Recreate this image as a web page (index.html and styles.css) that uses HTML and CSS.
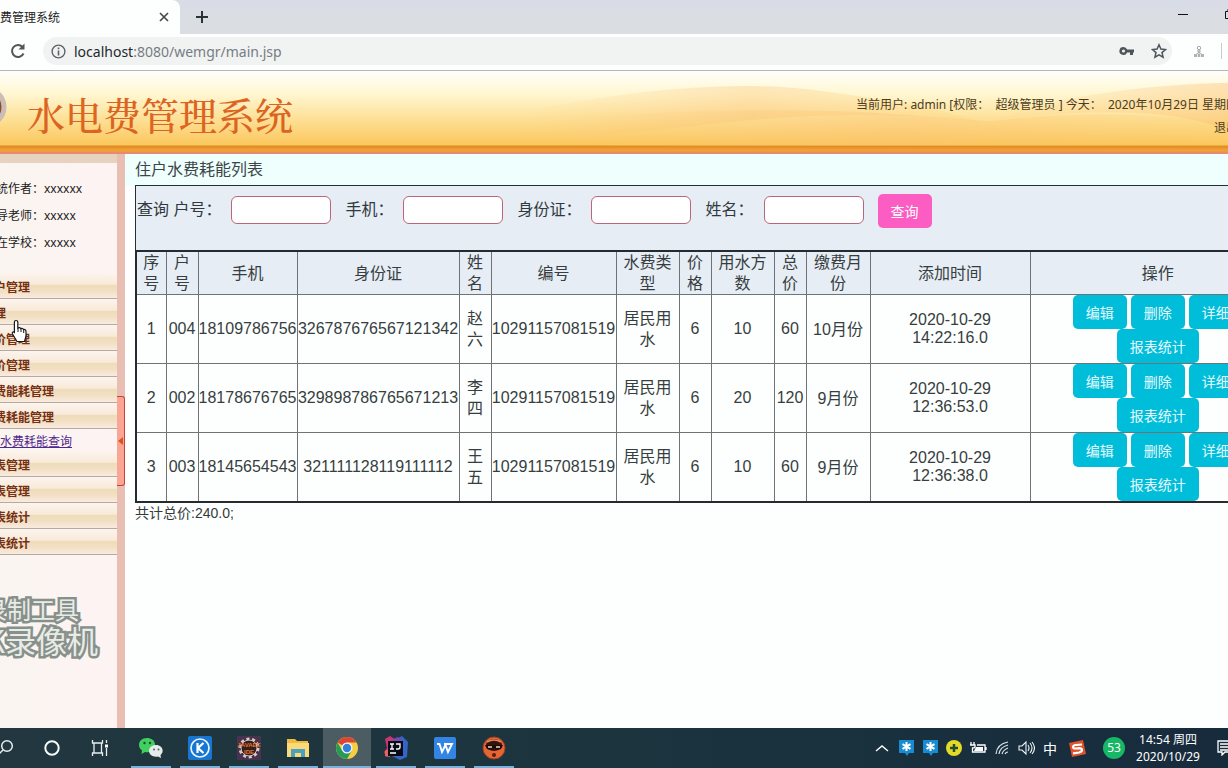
FILE: index.html
```html
<!DOCTYPE html>
<html lang="zh-CN">
<head>
<meta charset="utf-8">
<title>水电费管理系统</title>
<link rel="stylesheet" href="styles.css">
</head>
<body>
<div class="screen">
  <div class="tabs">
    <div class="tab"><span>费管理系统</span>
      <button class="plain tab-close" aria-label="关闭"><svg width="10" height="10" viewBox="0 0 10 10"><path d="M1 1l8 8M9 1l-8 8" stroke="#444b4e" stroke-width="1.7"/></svg></button>
    </div>
    <button class="plain new-tab" aria-label="新标签页"><svg width="14" height="14" viewBox="0 0 14 14"><path d="M7 1v12M1 7h12" stroke="#293236" stroke-width="2"/></svg></button>
    <div class="window-buttons">
      <svg width="12" height="12" viewBox="0 0 12 12"><path d="M1 6.500h10" stroke="#111" stroke-width="1"/></svg>
      <svg width="12" height="12" viewBox="0 0 12 12"><path d="M1.500 3.500h7v7h-7zM4 3V1h7v7H9" fill="none" stroke="#111"/></svg>
    </div>
  </div>
  <div class="address">
    <button class="plain reload" aria-label="刷新"><svg width="18" height="18" viewBox="0 0 18 18"><path d="M14.500 11.500A6 6 0 1 1 13.500 5" fill="none" stroke="#50575a" stroke-width="2"/><path d="M15.500 1.500v6h-6z" fill="#50575a"/></svg></button>
    <div class="url">
      <svg width="15" height="15" viewBox="0 0 15 15"><circle cx="7.500" cy="7.500" r="6.400" fill="none" stroke="#5c6366" stroke-width="1.400"/><path d="M7.500 6.500v5M7.500 3.500v1.700" stroke="#5c6366" stroke-width="1.600"/></svg>
      <span class="url-text"><b>localhost</b>:8080/wemgr/main.jsp</span>
      <svg class="key" width="16" height="12" viewBox="0 0 16 12"><path d="M4.500 2a4 4 0 1 0 3.600 5.500H11V10h3V7.500h1v-3H8.100A4 4 0 0 0 4.500 2z" fill="#4d5558"/><circle cx="4.500" cy="6" r="1.600" fill="#eef0f1"/></svg>
      <svg width="16" height="16" viewBox="0 0 16 16"><path d="M8 1.800l1.900 4.300 4.600.4-3.500 3.100 1.100 4.600L8 11.800l-4.100 2.400L5 9.600 1.500 6.500l4.600-.4z" fill="none" stroke="#4d5558" stroke-width="1.500"/></svg>
    </div>
    <svg class="ext" width="12" height="13" viewBox="0 0 12 13"><path d="M6 4v6M6 7L2.500 10M6 7l3.500 3M4 6h4" fill="none" stroke="#a5a9aa"/><circle cx="6" cy="3" r="1.700" fill="none" stroke="#a5a9aa"/><path d="M1 9h3v3H1zM4.700 9h2.600v3H4.700zM8 9h3v3H8z" fill="#b0b3b4"/></svg>
    <i class="divider"></i>
  </div>

  <header class="banner">
    <svg class="waves" viewBox="0 0 1228 76" preserveAspectRatio="none">
      <defs>
        <linearGradient id="hill" x1="0" y1="0" x2="1" y2="0"><stop offset="0" stop-color="#fbbd70" stop-opacity="0"/><stop offset=".5" stop-color="#fbbd70" stop-opacity=".32"/><stop offset="1" stop-color="#fbc45c" stop-opacity=".1"/></linearGradient>
        <linearGradient id="rise" x1="0" y1="0" x2="1" y2="0"><stop offset="0" stop-color="#fbbd70" stop-opacity="0"/><stop offset="1" stop-color="#fbbd70" stop-opacity=".4"/></linearGradient>
      </defs>
      <path d="M520 42Q700 4 820 20T980 52Q860 36 700 55T520 60z" fill="url(#hill)"/>
      <path d="M980 52Q1090 15 1228 12V60Q1150 28 980 52z" fill="url(#rise)"/>
      <path d="M560 48Q760 34 900 44T980 52Q1100 36 1228 52V76H560z" fill="url(#hill)"/>
    </svg>
    <svg class="emblem" width="8" height="40" viewBox="0 0 8 40"><circle cx="-14" cy="20" r="18" fill="#8c4c2d" stroke="#cbbcb5" stroke-width="5"/></svg>
    <h1>水电费管理系统</h1>
    <div class="user">
      <p>当前用户: admin [权限：&nbsp; 超级管理员 ] 今天：&nbsp; 2020年10月29日 星期四</p>
      <a href="#">退出</a>
    </div>
  </header>

  <div class="body">
    <aside class="side">
      <div class="about"><p>统作者：xxxxxx</p><p>导老师：xxxxx</p><p>在学校：xxxxx</p></div>
      <nav class="menu">
        <a href="#">户管理</a><a href="#">理</a><a href="#">价管理</a><a href="#">价管理</a><a href="#">费能耗管理</a><a href="#">费耗能管理</a>
        <a class="sub" href="#">水费耗能查询</a>
        <a href="#">表管理</a><a href="#">表管理</a><a href="#">表统计</a><a href="#">表统计</a>
      </nav>
      <div class="watermark"><p>录制工具</p><p class="large">K录像机</p></div>
      <svg class="cursor" width="18" height="24" viewBox="0 0 18 24"><path d="M5 1.500c1 0 1.800.6 1.800 1.600v6c1-.8 2.500-.4 3 .5 1-.5 2.300 0 2.700.9 1.300-.3 2.500.5 2.500 2V17l-1.500 5.500H6L1.500 15c-.8-1.500.6-2.600 1.900-1.600V3c0-.9.600-1.500 1.600-1.500z" fill="#fff" stroke="#17191a" stroke-width="1.200"/><path d="M7 9v4M10 10v3M12.700 11v3" stroke="#17191a"/></svg>
    </aside>
    <div class="splitter"><button class="handle" aria-label="收起菜单"><svg width="5" height="8" viewBox="0 0 5 8"><path d="M5 0v8L0 4z" fill="#d9541e"/></svg></button></div>
    <main class="main">
      <h2>住户水费耗能列表</h2>
      <div class="sheet">
        <form class="filter">
          <label>查询 户号：<input type="text"></label>
          <label>手机：<input type="text"></label>
          <label>身份证：<input type="text"></label>
          <label>姓名：<input type="text"></label>
          <button class="btn search" type="button">查询</button>
        </form>
        <table>
          <colgroup><col class="c30"><col class="c32"><col class="c99"><col class="c162"><col class="c32"><col class="c125"><col class="c63"><col class="c32"><col class="c63"><col class="c32"><col class="c64"><col class="c160"><col class="c256"></colgroup>
          <thead><tr><th>序号</th><th>户号</th><th>手机</th><th>身份证</th><th>姓名</th><th>编号</th><th>水费类型</th><th>价格</th><th>用水方数</th><th>总价</th><th>缴费月份</th><th>添加时间</th><th>操作</th></tr></thead>
          <tbody>
            <tr><td>1</td><td>004</td><td>18109786756</td><td>326787676567121342</td><td class="cn">赵六</td><td>10291157081519</td><td class="cn">居民用水</td><td>6</td><td>10</td><td>60</td><td class="cn">10月份</td><td class="time">2020-10-29 14:22:16.0</td><td><div class="ops"><button class="btn">编辑</button><button class="btn">删除</button><button class="btn">详细</button><button class="btn">报表统计</button></div></td></tr>
            <tr><td>2</td><td>002</td><td>18178676765</td><td>329898786765671213</td><td class="cn">李四</td><td>10291157081519</td><td class="cn">居民用水</td><td>6</td><td>20</td><td>120</td><td class="cn">9月份</td><td class="time">2020-10-29 12:36:53.0</td><td><div class="ops"><button class="btn">编辑</button><button class="btn">删除</button><button class="btn">详细</button><button class="btn">报表统计</button></div></td></tr>
            <tr><td>3</td><td>003</td><td>18145654543</td><td>321111128119111112</td><td class="cn">王五</td><td>10291157081519</td><td class="cn">居民用水</td><td>6</td><td>10</td><td>60</td><td class="cn">9月份</td><td class="time">2020-10-29 12:36:38.0</td><td><div class="ops"><button class="btn">编辑</button><button class="btn">删除</button><button class="btn">详细</button><button class="btn">报表统计</button></div></td></tr>
          </tbody>
        </table>
      </div>
      <p class="total">共计总价:240.0;</p>
    </main>
  </div>

  <footer class="taskbar">
    <div class="system">
      <span><svg width="20" height="20" viewBox="0 0 20 20"><circle cx="13" cy="8" r="5.300" fill="none" stroke="#e8eef0" stroke-width="1.500"/><path d="M9 12l-6 6" stroke="#e8eef0" stroke-width="1.500"/></svg></span>
      <span><svg width="18" height="18" viewBox="0 0 18 18"><circle cx="9" cy="9" r="6.700" fill="none" stroke="#f4f8f8" stroke-width="2"/></svg></span>
      <span><svg width="18" height="18" viewBox="0 0 18 18"><path d="M1.500 1v3h10V1M1.500 17v-3h10v3M3 4v10M10.500 4v10M15.500 1v3M15.500 9v8" fill="none" stroke="#e8eef0" stroke-width="1.300"/><path d="M14 5.500h3v3h-3z" fill="#fff"/></svg></span>
    </div>
    <div class="apps">
      <span class="app"><svg width="26" height="24" viewBox="0 0 26 24"><path d="M9 2C4 2 1 5 1 9c0 2 1 4 3 5.500L3.500 18l3.500-2c6 1 10-2 10-7S13 2 9 2z" fill="#42cf61"/><circle cx="6.500" cy="7" r="1.200" fill="#17512b"/><circle cx="12" cy="7" r="1.200" fill="#17512b"/><path d="M18 9c-4 0-7 2.500-7 6s4 6.500 9 5.500l3 1.500-.5-3C27 15 24 9 18 9z" fill="#e3ecea"/><circle cx="16" cy="13.500" r="1" fill="#59635f"/><circle cx="20.500" cy="13.500" r="1" fill="#59635f"/></svg></span>
      <span class="app"><svg width="24" height="24" viewBox="0 0 24 24"><rect width="24" height="24" rx="2" fill="#1976d0"/><circle cx="12" cy="12" r="9" fill="none" stroke="#e6f4ff" stroke-width="1.700"/><path d="M9.500 7v10M15.500 7L10 12l5.500 5" fill="none" stroke="#fff" stroke-width="2.200"/></svg></span>
      <span class="app"><svg width="24" height="24" viewBox="0 0 24 24"><rect width="24" height="24" fill="#48334f"/><circle cx="12" cy="12" r="9" fill="#2b1d22" stroke="#d9ccc9" stroke-width="3" stroke-dasharray="3 2.650"/><circle cx="12" cy="12" r="8" fill="#30201f" stroke="#d8cbc8"/><text class="ide" x="12" y="11">JAVAEE</text><text class="ide" x="12" y="18">IDE</text></svg></span>
      <span class="app"><svg width="24" height="22" viewBox="0 0 24 22"><path d="M1 2h8l2 2h11v16H1z" fill="#efba3f"/><path d="M1 6h22v14H1z" fill="#f9d978"/><path d="M5 20v-8h14v8h-4v-4H9v4z" fill="#4ba0bd"/></svg></span>
      <span class="app active"><svg width="24" height="24" viewBox="0 0 24 24"><circle cx="12" cy="12" r="11" fill="#f5ce42"/><path d="M12 12L2.500 6.500A11 11 0 0 1 21.500 6.500H12z" fill="#dc4535"/><path d="M2.500 6.500A11 11 0 0 0 12 23l4.700-8.300L12 12 7.300 14.700z" fill="#269b58"/><circle cx="12" cy="12" r="5.500" fill="#f3f5f4"/><circle cx="12" cy="12" r="4.200" fill="#367fd8"/></svg></span>
      <span class="app"><svg width="24" height="24" viewBox="0 0 24 24"><path d="M1 3l5-3 6 4-5 14-5 3-2-5 3-4z" fill="#c93773"/><path d="M1 15l5-3v9l-5-1z" fill="#e76262"/><path d="M12 3l6-3 6 6-1 15-7 3-8-4z" fill="#3465c7"/><path d="M9 3l5-2 5 4H9z" fill="#7947b1"/><rect x="4" y="5" width="15" height="15" fill="#090b16"/><path d="M6 8h4M8 8v5M6 13h4M12 8h4v3q0 2-2 2h-2M6 17h6" fill="none" stroke="#fff" stroke-width="1.300"/></svg></span>
      <span class="app"><svg width="22" height="22" viewBox="0 0 22 22"><rect width="22" height="22" rx="2" fill="#3285e5"/><path d="M3 7h2.500l2.500 8 3.500-7 2.500 7 4-8H10" fill="none" stroke="#fff" stroke-width="1.900"/></svg></span>
      <span class="app"><svg width="24" height="24" viewBox="0 0 24 24"><circle cx="12" cy="12" r="11" fill="#e66632" stroke="#a43d22"/><ellipse cx="12" cy="9" rx="8" ry="6" fill="#38120f"/><path d="M5 6q7-4 14 0" fill="none" stroke="#e78a57" stroke-width="1.500"/><path d="M3 9h18l-2 4q-4 2-7-1-3 3-7 1z" fill="#160d0d"/><path d="M6 11h4M18 11h-4" stroke="#f5d5b6" stroke-width="1.500"/><circle cx="12" cy="19" r="2" fill="#541f16"/></svg></span>
    </div>
    <div class="tray">
      <span><svg width="14" height="8" viewBox="0 0 14 8"><path d="M1 7l6-5 6 5" fill="none" stroke="#fff" stroke-width="1.400"/></svg></span>
      <span><svg width="15" height="16" viewBox="0 0 15 16"><path d="M0 0h15v13h-5l-2 3-2-3H0z" fill="#198bd0"/><path d="M7.500 2v9M3.500 4.200l8 4.600M11.500 4.200l-8 4.600" stroke="#fff" stroke-width="2"/></svg></span>
      <span><svg width="15" height="16" viewBox="0 0 15 16"><path d="M0 0h15v13h-5l-2 3-2-3H0z" fill="#198bd0"/><path d="M7.500 2v9M3.500 4.200l8 4.600M11.500 4.200l-8 4.600" stroke="#fff" stroke-width="2"/></svg></span>
      <span><svg width="16" height="16" viewBox="0 0 16 16"><circle cx="8" cy="8" r="8" fill="#e2dc28"/><path d="M8 4v8M4 8h8" stroke="#264d2a" stroke-width="2.500"/></svg></span>
      <span><svg width="17" height="14" viewBox="0 0 17 14"><path d="M1 1v3M4 1v3M0 4h5v2Q5 7 2.500 7V11H15V4H7M16 6v3" fill="none" stroke="#fff" stroke-width="1.300"/><path d="M6 6h7v4H4z" fill="#fff"/></svg></span>
      <span><svg width="15" height="14" viewBox="0 0 15 14"><path d="M1 13Q2 3 13 1M4 13Q5 6 13 4M7 13Q8 9 13 7M10 13q1-2 3-2" fill="none" stroke="#dce5e9" stroke-width="1.200"/></svg></span>
      <span><svg width="17" height="14" viewBox="0 0 17 14"><path d="M1 5h3l4-4v12L4 9H1zM10 4q2 3 0 6M12 2q4 5 0 10M14 1q5 6 0 12" fill="none" stroke="#eef3f5" stroke-width="1.100"/></svg></span>
      <span class="ime">中</span>
      <span class="sogou"><svg width="17" height="17" viewBox="0 0 17 17"><path d="M0 3l14-3 3 14-14 3z" fill="#e1512b"/><path d="M13 4.500l-6 .5q-3 .3-3 2t3 1.500l3-.3q3 0 3 1.800T10 12.500l-6 .8" fill="none" stroke="#fff" stroke-width="2.200"/></svg></span>
      <span class="score"><b>53</b></span>
      <div class="clock"><p>14:54 周四</p><p>2020/10/29</p></div>
      <span class="action"><svg width="12" height="16" viewBox="0 0 12 16"><path d="M12 1H2v11h4v3l3-3h3M4 4h8M4 7h8M4 10h8" fill="none" stroke="#fff" stroke-width="1.300"/></svg></span>
    </div>
  </footer>
</div>
</body>
</html>
```

FILE: styles.css
```css
* { box-sizing: border-box; }
body { margin: 0; font-family: "Noto Sans", "Noto Sans CJK SC", sans-serif; font-size: 12px; color: #222; }
p, h1, h2 { margin: 0; font-weight: normal; }
a { color: inherit; text-decoration: none; }
svg { display: block; flex: none; }
.plain { border: 0; background: none; padding: 0; }
.screen { display: flex; flex-direction: column; height: 100vh; overflow: hidden; background: #fdfffe; }

.tabs { display: flex; flex: none; align-items: center; height: 34px; background: linear-gradient(#d8dce7, #dadde1 60%); }
.tab { display: flex; align-items: center; justify-content: space-between; width: 180px; height: 34px; padding-right: 11px; background: #fdfffe; border-top-right-radius: 8px; }
.new-tab { margin-left: 15px; }
.window-buttons { display: flex; gap: 35px; margin: 0 -8px 6px auto; }
.address { display: flex; flex: none; align-items: center; height: 37px; padding: 0 0 2px 9px; border-bottom: 1px solid #b4b7b5; }
.url { display: flex; flex: 1; align-items: center; gap: 8px; height: 28px; margin: 0 21px 0 16px; padding: 0 5px 0 8px; border-radius: 14px; background: #f1f3f3; }
.url-text { flex: 1; font-size: 14px; color: #767d82; }
.url-text b { font-weight: normal; color: #24292c; }
.key { margin-right: 8px; }
.divider { width: 1px; height: 16px; margin: 0 6px 0 16px; background: #c8cbcc; }

.banner { position: relative; display: flex; flex: none; justify-content: space-between; height: 83px; border-bottom: 2px solid #e58b70; background: linear-gradient(#fffefa 0, #fff7d2 28%, #fde198 58%, #fbc75d 74px, #de8a22 75px, #f3a13a 79px, #ef9839 81px); overflow: hidden; }
.waves { position: absolute; top: 0; left: 0; width: 100%; height: 75px; }
.emblem { position: absolute; left: 0; top: 16px; }
.banner h1 { position: relative; padding-left: 27px; font-family: "Noto Serif CJK SC", "Noto Sans CJK SC", serif; font-size: 38px; font-weight: 500; line-height: 86px; color: #dc6422; white-space: nowrap; }
.user { position: relative; margin-right: -10px; padding-top: 22px; line-height: 23px; text-align: right; white-space: nowrap; color: #4b3c20; }

.body { display: flex; flex: 1; min-height: 0; }
.side { position: relative; flex: none; width: 117px; border-top: 9px solid #e6d2bf; padding-top: 12px; overflow: hidden; background: linear-gradient(90deg, #faf5f0, #fdf3f3); }
.about { margin-left: -4px; line-height: 27px; color: #1b1b1b; white-space: nowrap; }
.menu { display: flex; flex-direction: column; margin-top: 17px; }
.menu a { height: 26px; padding: 1px 1px 0 0; border-bottom: 1px solid #b5aaa2; background: linear-gradient(#fcf4ee 0, #f8ead9 45%, #efdcb9 50%, #f2e0c6 75%, #f9ebdf); font-weight: bold; line-height: 28px; text-indent: -6px; color: #752f14; white-space: nowrap; }
.menu .sub { height: 22px; border: 0; background: none; font-weight: normal; line-height: 24px; text-indent: 0; text-decoration: underline; color: #50278c; }
.watermark { display: flex; flex-direction: column; margin: 38px 0 0 -17px; font-family: "Noto Sans CJK SC", sans-serif; font-size: 24px; font-weight: 900; line-height: 32px; color: #e8ece7; white-space: nowrap; -webkit-text-stroke: 5px #88908b; paint-order: stroke fill; }
.watermark .large { padding-left: 2px; font-size: 31px; line-height: 30px; }
.cursor { position: absolute; left: 11px; top: 156px; }
.splitter { display: flex; flex: none; align-items: center; width: 8px; background: #e8bfb2; }
.handle { display: flex; align-items: center; justify-content: center; width: 8px; height: 90px; padding: 0; border: 1px solid #c84334; border-left: 0; border-radius: 0 3px 3px 0; background: #fba594; }

.main { flex: 1; min-width: 0; padding-left: 10px; overflow: hidden; font-family: "Liberation Sans", "Noto Sans CJK SC", sans-serif; background: linear-gradient(#effffd 0, #effffd 32px, #fdfffe 32px); }
.main h2 { padding-top: 1px; font-size: 16px; line-height: 30px; color: #3b4547; }
.sheet { width: max-content; border-top: 1px solid #222f35; background: #e6edf5; }
.filter { display: flex; gap: 14px; height: 64px; padding: 8px 0 0 1px; border-left: 1px solid #222f35; font-size: 16px; color: #30393d; }
.filter label { display: flex; align-items: center; gap: 10px; height: 32px; line-height: 20px; white-space: nowrap; }
.filter input { width: 100px; height: 28px; border: 1px solid #bb6678; border-radius: 6px; background: #fff; }
.btn { height: 34px; padding: 0 13px 1px; border: 0; border-radius: 5px; background: #00bdda; font-family: "Liberation Sans", "Noto Sans CJK SC", sans-serif; font-size: 14px; color: #e6fbff; white-space: nowrap; }
.search { background: #fb5dc2; color: #fff; }
table { width: 1152px; table-layout: fixed; border-collapse: collapse; border: 2px solid #252b2e; font-size: 16px; color: #373e40; }
th, td { padding: 0; border: 1px solid #6e7476; text-align: center; }
th { height: 43px; font-weight: normal; line-height: 21px; }
td { height: 69px; background: #fdfffe; line-height: 18px; }
.cn { line-height: 21px; }
.time { padding: 0 30px; }
.c30 { width: 30px; }
.c32 { width: 32px; }
.c63 { width: 63px; }
.c64 { width: 64px; }
.c99 { width: 99px; }
.c125 { width: 125px; }
.c160 { width: 160px; }
.c162 { width: 162px; }
.c256 { width: 256px; }
.ops { display: flex; flex-wrap: wrap; justify-content: center; column-gap: 4px; padding: 0 30px; }
.total { font-size: 14px; line-height: 20px; color: #34393a; }

.taskbar { display: flex; flex: none; justify-content: space-between; height: 40px; background: linear-gradient(90deg, #22373f, #1b343e 50%, #172b3d); color: #fff; }
.system { display: flex; margin-left: -20px; }
.system span { display: grid; place-items: center; width: 48px; }
.apps { display: flex; gap: 1px; margin: 0 auto 0 3px; }
.app { display: grid; place-items: center; width: 48px; height: 40px; background: linear-gradient(#76b2dc, #76b2dc) center bottom / 40px 2px no-repeat; }
.active { background: linear-gradient(#76b2dc, #76b2dc) center bottom / 48px 2px no-repeat #4b5d63; }
.ide { font: bold 6px "Liberation Sans", sans-serif; text-anchor: middle; fill: #ed742e; }
.tray { display: flex; align-items: center; }
.tray span { display: grid; place-items: center; width: 24px; }
.tray .ime { font-size: 14px; }
.tray .sogou { width: 30px; }
.tray .score { width: 44px; }
.score b { width: 22px; height: 22px; border-radius: 50%; background: #16b765; font-size: 12px; font-weight: normal; line-height: 22px; text-align: center; }
.clock { width: 64px; font-size: 12px; line-height: 17px; text-align: center; white-space: nowrap; }
.tray .action { width: 28px; justify-items: end; }
```
